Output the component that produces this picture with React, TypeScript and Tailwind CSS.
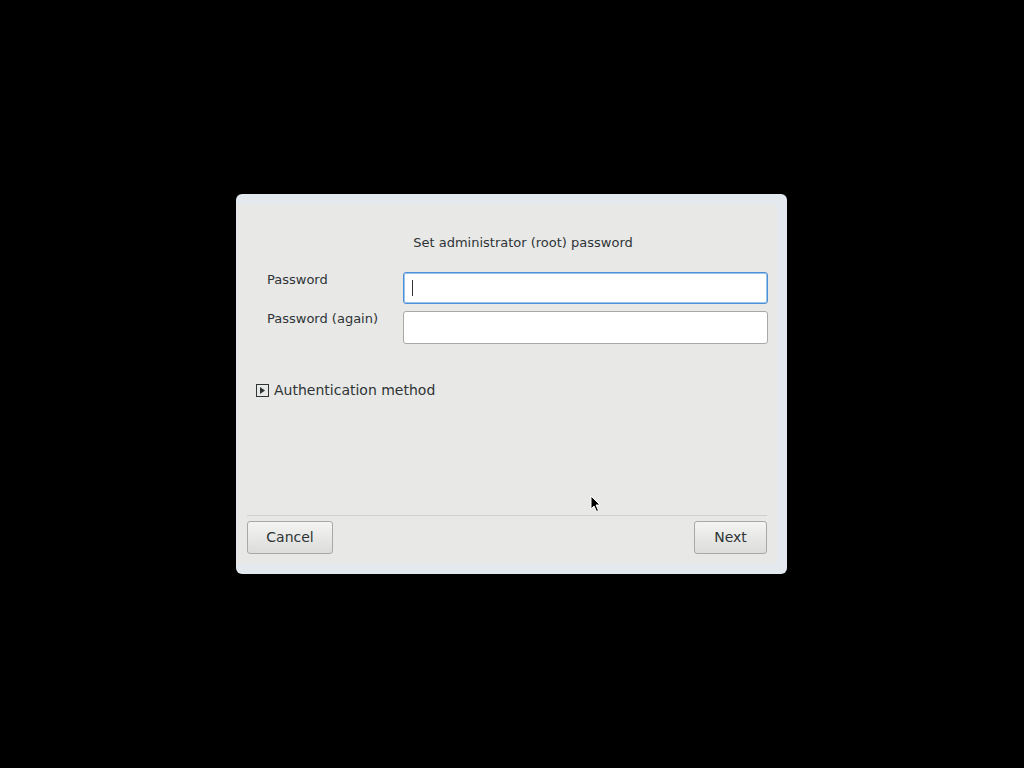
export default function App() {
  return (
    <div className="relative w-[1024px] h-[768px] bg-black" style={{ fontFamily: '"DejaVu Sans", sans-serif' }}>
      <div className="absolute left-[236px] top-[194px] w-[551px] h-[380px] rounded-[6px] bg-[#e4e9ef] pl-px pt-[10px] pr-[10px] pb-[10px]">
        <div className="flex flex-col h-full bg-[#e8e8e7] text-[13px] text-[#2e3436]">
          <div className="h-[31px]" />
          <div className="text-center pl-[32px] leading-[16px]">Set administrator (root) password</div>
          <div className="h-[21px]" />
          <div className="flex flex-col gap-[7px] pl-[30px] pr-[9px]">
            <div className="flex items-start">
              <span className="w-[136px] pt-[-1px] leading-[16px]">Password</span>
              <div className="flex-1 h-[32px] bg-white border border-[#4a90d9] rounded-[3px] shadow-[inset_0_0_0_1px_#9cc3ea] flex items-center pl-[8px]">
                <div className="w-px h-[16px] bg-[#2e3436]" />
              </div>
            </div>
            <div className="flex items-start">
              <span className="w-[136px] leading-[16px]">Password (again)</span>
              <div className="flex-1 h-[33px] bg-white border border-[#a8a8a5] rounded-[3px]" />
            </div>
          </div>
          <div className="flex items-center gap-[5px] pl-[19px] mt-[36px]">
            <svg width="13" height="13" viewBox="0 0 13 13">
              <rect x="0.5" y="0.5" width="12" height="12" fill="none" stroke="#2e3436" />
              <path d="M4 3 L9 6.5 L4 10 Z" fill="#2e3436" />
            </svg>
            <span className="text-[14px]">Authentication method</span>
          </div>
          <div className="flex-1" />
          <div className="mx-[10px] border-t border-[#cfcfcd]" />
          <div className="flex justify-between px-[10px] pt-[5px] pb-[10px]">
            <button className="w-[86px] h-[33px] rounded-[3px] border border-[#a8a8a5] bg-gradient-to-b from-[#f4f4f3] to-[#dcdcda] text-[14px] text-[#2e3436]">Cancel</button>
            <button className="w-[73px] h-[33px] rounded-[3px] border border-[#a8a8a5] bg-gradient-to-b from-[#f4f4f3] to-[#dcdcda] text-[14px] text-[#2e3436]">Next</button>
          </div>
        </div>
      </div>
      <svg className="absolute left-[590px] top-[495px]" width="12" height="18" viewBox="0 0 12 18">
        <path d="M1 1 L1 14 L4 11 L6.5 16.5 L8.5 15.5 L6 10 L10 10 Z" fill="#000" stroke="#fff" strokeWidth="1" />
      </svg>
    </div>
  );
}
